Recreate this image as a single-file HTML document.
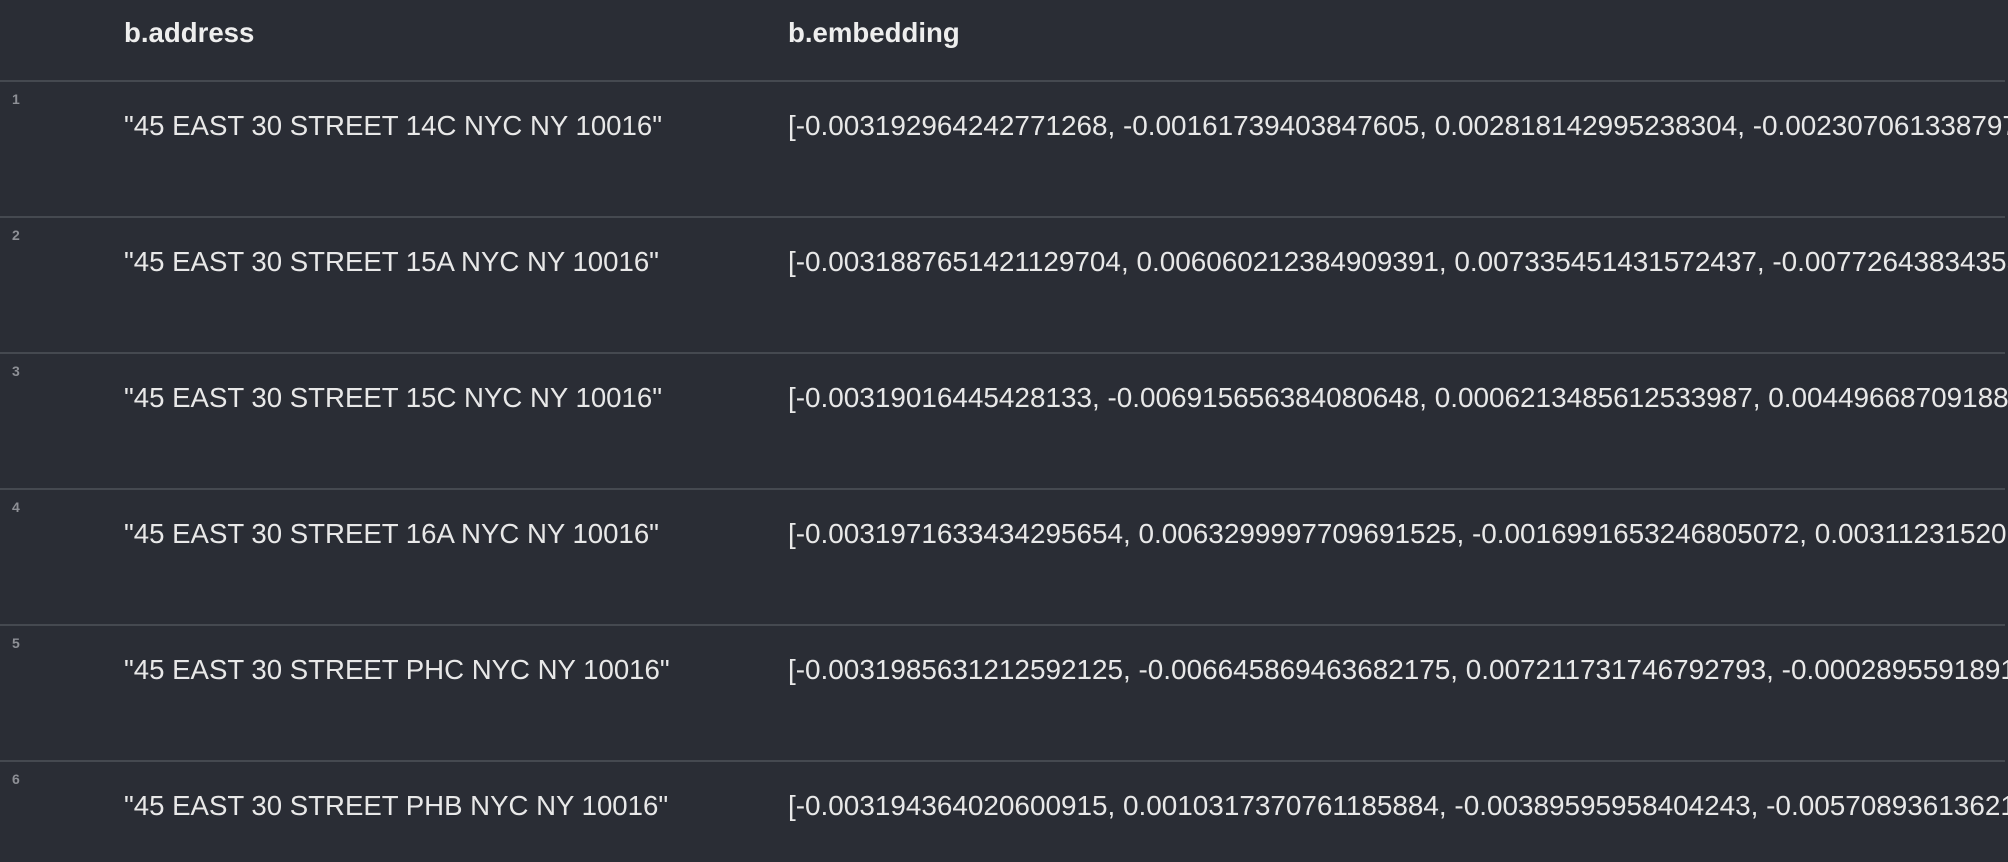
<!DOCTYPE html>
<html><head><meta charset="utf-8"><style>
html,body{margin:0;padding:0;width:2008px;height:862px;overflow:hidden;background:#2a2d35;font-family:"Liberation Sans",Arial,sans-serif;}
.wrap{position:absolute;left:0;top:0;width:2008px;height:862px;overflow:hidden;}
.h{position:absolute;top:15px;font-size:27.6px;font-weight:bold;color:#eeeeee;line-height:36px;}
.sep{position:absolute;left:0;width:2005px;height:2px;background:#454950;}
.num{position:absolute;left:12px;font-size:14px;font-weight:bold;color:#8e9096;line-height:16px;}
.c{position:absolute;font-size:27.6px;color:#e8e8e8;line-height:36px;white-space:nowrap;overflow:hidden;}
.e{left:788px;width:1220px;font-size:27.9px;}
</style></head><body><div class="wrap">
<div class="h" style="left:124px">b.address</div>
<div class="h" style="left:788px">b.embedding</div>

<div class="sep" style="top:80px"></div>
<div class="num" style="top:91px">1</div>
<div class="c" style="left:124px;top:108px">"45 EAST 30 STREET 14C NYC NY 10016"</div>
<div class="c e" style="top:108px">[-0.003192964242771268, -0.00161739403847605, 0.002818142995238304, -0.002307061338797301, 0.00412</div>

<div class="sep" style="top:216px"></div>
<div class="num" style="top:227px">2</div>
<div class="c" style="left:124px;top:244px">"45 EAST 30 STREET 15A NYC NY 10016"</div>
<div class="c e" style="top:244px">[-0.0031887651421129704, 0.006060212384909391, 0.007335451431572437, -0.007726438343551, 0.00412</div>

<div class="sep" style="top:352px"></div>
<div class="num" style="top:363px">3</div>
<div class="c" style="left:124px;top:380px">"45 EAST 30 STREET 15C NYC NY 10016"</div>
<div class="c e" style="top:380px">[-0.00319016445428133, -0.006915656384080648, 0.0006213485612533987, 0.004496687091881, 0.00412</div>

<div class="sep" style="top:488px"></div>
<div class="num" style="top:499px">4</div>
<div class="c" style="left:124px;top:516px">"45 EAST 30 STREET 16A NYC NY 10016"</div>
<div class="c e" style="top:516px">[-0.0031971633434295654, 0.0063299997709691525, -0.0016991653246805072, 0.003112315201, 0.00412</div>

<div class="sep" style="top:624px"></div>
<div class="num" style="top:635px">5</div>
<div class="c" style="left:124px;top:652px">"45 EAST 30 STREET PHC NYC NY 10016"</div>
<div class="c e" style="top:652px">[-0.0031985631212592125, -0.006645869463682175, 0.007211731746792793, -0.0002895591891, 0.00412</div>

<div class="sep" style="top:760px"></div>
<div class="num" style="top:771px">6</div>
<div class="c" style="left:124px;top:788px">"45 EAST 30 STREET PHB NYC NY 10016"</div>
<div class="c e" style="top:788px">[-0.003194364020600915, 0.0010317370761185884, -0.00389595958404243, -0.00570893613621, 0.00412</div>
</div></body></html>
